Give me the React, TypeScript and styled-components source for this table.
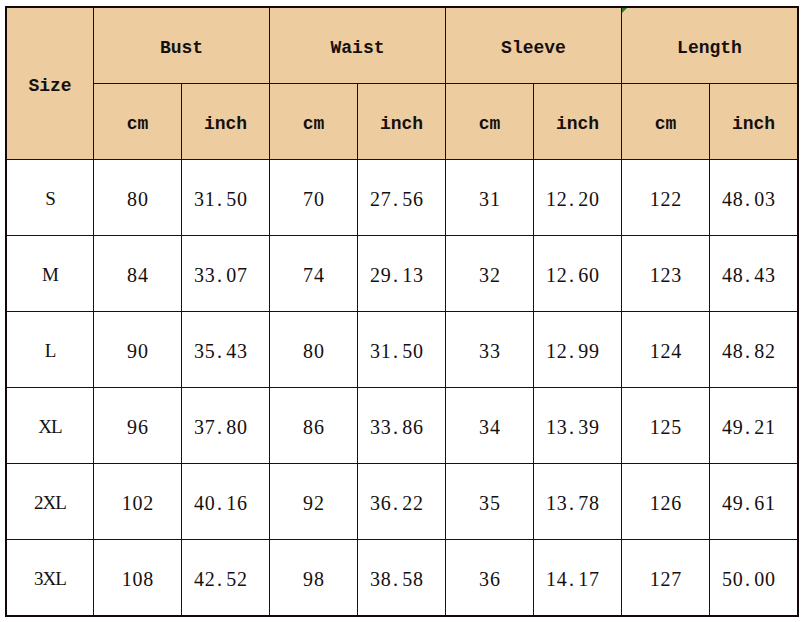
import React from "react";
import styled, { createGlobalStyle } from "styled-components";

const Global = createGlobalStyle`
  html, body { margin: 0; padding: 0; background: #ffffff; }
  body { font-family: "Liberation Serif", "Times New Roman", serif; }
`;

const Page = styled.div`
  padding: 6px 0 0 5px;
`;

const Grid = styled.div`
  display: grid;
  grid-template-columns: 86px repeat(8, 87px);
  grid-template-rows: repeat(8, 75px);
  gap: 1px;
  width: max-content;
  background: #1c0f0f;
  border: 2px solid #120808;
`;

const Cell = styled.div<{ $head?: boolean; $col?: string; $row?: string; $shift?: boolean }>`
  position: relative;
  display: flex;
  align-items: center;
  justify-content: center;
  padding-top: ${(p) => (p.$head ? 4 : 3)}px;
  padding-right: ${(p) => (p.$shift ? 10 : 0)}px;
  box-sizing: border-box;
  background: ${(p) => (p.$head ? "#edcc9f" : "#ffffff")};
  color: #141010;
  font-family: ${(p) =>
    p.$head
      ? `"Liberation Mono", "Courier New", monospace`
      : `"Liberation Serif", "Times New Roman", serif`};
  font-size: ${(p) => (p.$head ? 18 : 20)}px;
  font-weight: ${(p) => (p.$head ? 700 : 400)};
  grid-column: ${(p) => p.$col ?? "auto"};
  grid-row: ${(p) => p.$row ?? "auto"};
  white-space: pre;
`;

const SizeLabel = styled.span`
  font-family: "Liberation Serif", "Times New Roman", serif;
  font-size: 19px;
  letter-spacing: -1px;
`;

const Char = styled.span<{ $dot?: boolean }>`
  display: inline-block;
  width: 10.8px;
  text-align: ${(p) => (p.$dot ? "left" : "center")};
  padding-left: ${(p) => (p.$dot ? 2 : 0)}px;
  box-sizing: border-box;
`;

const Marker = styled.span`
  position: absolute;
  left: 0;
  top: 0;
  width: 0;
  height: 0;
  border-top: 5px solid #2f7a1c;
  border-right: 5px solid transparent;
`;

const groups = ["Bust", "Waist", "Sleeve", "Length"];

const rows: string[][] = [
  ["S", "80", "31.50", "70", "27.56", "31", "12.20", "122", "48.03"],
  ["M", "84", "33.07", "74", "29.13", "32", "12.60", "123", "48.43"],
  ["L", "90", "35.43", "80", "31.50", "33", "12.99", "124", "48.82"],
  ["XL", "96", "37.80", "86", "33.86", "34", "13.39", "125", "49.21"],
  ["2XL", "102", "40.16", "92", "36.22", "35", "13.78", "126", "49.61"],
  ["3XL", "108", "42.52", "98", "38.58", "36", "14.17", "127", "50.00"],
];

function Mono({ text }: { text: string }) {
  return (
    <>
      {text.split("").map((c, i) => (
        <Char key={i} $dot={c === "."}>
          {c}
        </Char>
      ))}
    </>
  );
}

export default function App() {
  return (
    <>
      <Global />
      <Page>
        <Grid>
          <Cell $head $col="1" $row="1 / span 2">
            Size
          </Cell>
          {groups.map((g, i) => (
            <Cell key={g} $head $col={`${2 + i * 2} / span 2`} $row="1">
              {g === "Length" && <Marker />}
              {g}
            </Cell>
          ))}
          {groups.flatMap((g, i) => [
            <Cell key={g + "cm"} $head $col={`${2 + i * 2}`} $row="2">
              cm
            </Cell>,
            <Cell key={g + "in"} $head $col={`${3 + i * 2}`} $row="2">
              inch
            </Cell>,
          ])}
          {rows.flatMap((r) =>
            r.map((v, j) => (
              <Cell key={r[0] + j} $shift={v.includes(".")}>
                {j === 0 ? <SizeLabel>{v}</SizeLabel> : <Mono text={v} />}
              </Cell>
            ))
          )}
        </Grid>
      </Page>
    </>
  );
}
